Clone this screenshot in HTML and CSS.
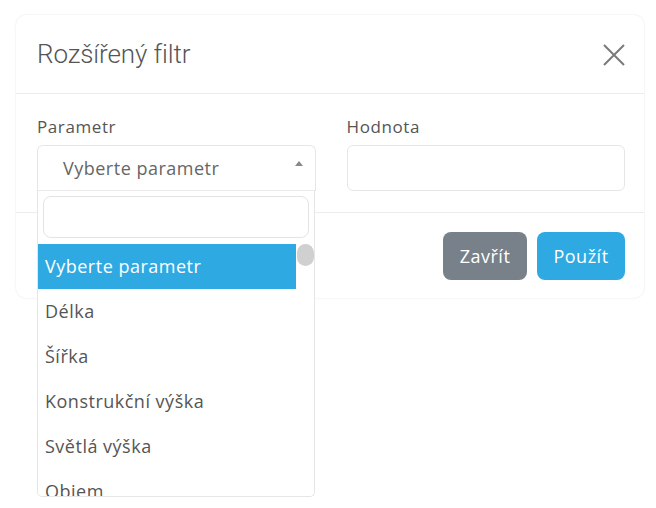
FILE: index.html
```html
<!DOCTYPE html>
<html lang="cs">
<head>
<meta charset="utf-8">
<title>Rozšířený filtr</title>
<link rel="stylesheet" href="styles.css">
</head>
<body>
<div class="modal">
  <div class="modal-header">
    <h2 class="modal-title">Rozšířený filtr</h2>
    <button class="close" aria-label="Zavřít">
      <svg width="24" height="24" viewBox="0 0 24 24"><path d="M2 2 L22 22 M22 2 L2 22" stroke="#7a7a7a" stroke-width="2" fill="none"/></svg>
    </button>
  </div>
  <div class="modal-body">
    <div class="field">
      <label class="label">Parametr</label>
      <div class="select-wrap">
        <div class="select">
          <span class="select-text">Vyberte parametr</span>
          <span class="caret"></span>
        </div>
        <div class="dropdown">
          <div class="search-wrap"><input class="search" type="text"></div>
          <div class="options">
            <ul class="option-list">
              <li class="option active">Vyberte parametr</li>
              <li class="option">Délka</li>
              <li class="option">Šířka</li>
              <li class="option">Konstrukční výška</li>
              <li class="option">Světlá výška</li>
              <li class="option">Objem</li>
            </ul>
            <div class="scrollbar"><div class="thumb"></div></div>
          </div>
        </div>
      </div>
    </div>
    <div class="field">
      <label class="label">Hodnota</label>
      <input class="input" type="text">
    </div>
  </div>
  <div class="modal-footer">
    <button class="btn btn-secondary">Zavřít</button>
    <button class="btn btn-primary">Použít</button>
  </div>
</div>
</body>
</html>
```
FILE: styles.css
```css
* { box-sizing: border-box; }
html { height: 100%; }
body {
  margin: 0;
  min-height: 508px;
  padding: 15px 12px 0 16px;
  background: #fff;
  font-family: "Open Sans", "Lato", sans-serif;
  color: #555;
}
.modal {
  width: 628px;
  height: 283px;
  background: #fff;
  border-radius: 10px;
  box-shadow: 0 0 2px rgba(0,0,0,0.12);
  display: flex;
  flex-direction: column;
}
.modal-header {
  height: 79px;
  display: flex;
  align-items: center;
  justify-content: space-between;
  padding: 0 18px 0 21px;
  border-bottom: 1px solid #ececec;
}
.modal-title {
  margin: 0;
  font-family: "Roboto", sans-serif;
  font-weight: 300;
  font-size: 26px;
  color: #555;
  letter-spacing: -0.1px;
}
.close {
  border: 0;
  background: none;
  padding: 0;
  width: 24px;
  height: 24px;
  display: flex;
  margin-top: 2px;
}
.modal-body {
  display: flex;
  gap: 31px;
  padding: 21px 19px 21px 21px;
  border-bottom: 1px solid #ececec;
}
.field {
  flex: 1;
  display: flex;
  flex-direction: column;
}
.label {
  font-size: 17px;
  line-height: 24px;
  margin-bottom: 6px;
  color: #555;
  letter-spacing: 0.6px;
}
.select-wrap { position: relative; }
.select {
  height: 46px;
  border: 1px solid #e6e6e6;
  border-bottom-color: #eaeaea;
  border-radius: 6px 6px 0 0;
  display: flex;
  align-items: center;
  padding: 0 12px 0 25px;
  justify-content: space-between;
}
.select-text {
  font-size: 18px;
  color: #666;
  letter-spacing: 0.5px;
}
.caret {
  width: 0;
  height: 0;
  border-left: 4px solid transparent;
  border-right: 4px solid transparent;
  border-bottom: 5px solid #888;
  margin-top: -10px;
}
.input {
  height: 46px;
  border: 1px solid #e6e6e6;
  border-radius: 6px;
  font: inherit;
}
.dropdown {
  position: absolute;
  left: 0;
  top: 46px;
  width: 278px;
  height: 306px;
  background: #fff;
  border: 1px solid #e6e6e6;
  border-top: 0;
  border-radius: 0 0 5px 5px;
  overflow: hidden;
  z-index: 2;
}
.search-wrap { padding: 5px 5px 6px 5px; }
.search {
  display: block;
  width: 100%;
  height: 42px;
  border: 1px solid #e3e3e3;
  border-radius: 8px;
  font: inherit;
}
.options {
  display: flex;
}
.option-list {
  list-style: none;
  margin: 0;
  padding: 0;
  width: 258px;
}
.option {
  height: 45px;
  line-height: 45px;
  padding-left: 7px;
  font-size: 18px;
  color: #555;
  white-space: nowrap;
  letter-spacing: 0.5px;
}
.option.active {
  background: #2fa9e2;
  color: #fff;
}
.scrollbar {
  flex: 1;
  padding-left: 1px;
}
.thumb {
  width: 17px;
  height: 22px;
  border-radius: 9px;
  background: #d0d0d0;
}
.modal-footer {
  display: flex;
  justify-content: flex-end;
  gap: 10px;
  padding: 19px 19px 0 0;
}
.btn {
  height: 48px;
  border: 0;
  border-radius: 8px;
  color: #fff;
  font-family: "Open Sans", "Lato", sans-serif;
  font-size: 18px;
  letter-spacing: 0.5px;
  padding: 0;
}
.btn-secondary { background: #78808a; width: 84px; }
.btn-primary { background: #2fa9e2; width: 88px; }
```
